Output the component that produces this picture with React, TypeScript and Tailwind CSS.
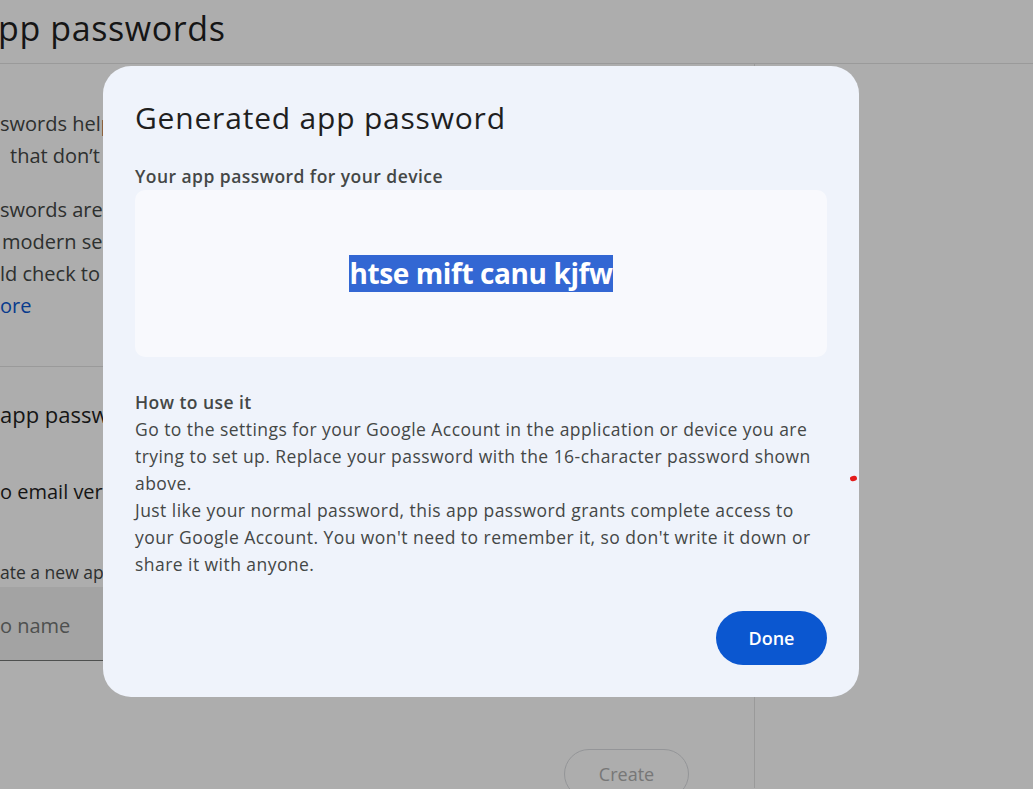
const sans = "font-['Open_Sans','Liberation_Sans',sans-serif]";

function BackgroundPage() {
  return (
    <div className="h-[789px] bg-white text-[#1f1f1f]">
      {/* Header */}
      <header className="h-16 border-b border-[#e3e3e3] flex items-center pb-[8px]">
        <h1 className="text-[34px] leading-[44px] tracking-[0.6px] -ml-[2px] whitespace-nowrap">pp passwords</h1>
      </header>

      <div className="flex">
        <main className="w-[755px] border-r border-[#e3e3e3] h-[724px]">
          {/* Intro, clipped where the dialog covers it */}
          <div className="w-[103px] overflow-hidden pt-[44px] text-[20px] leading-[32px] text-[#444746] whitespace-nowrap">
            <p>swords help you</p>
            <p className="pl-[10px]">that don’t support</p>
            <p className="mt-[22px]">swords are less</p>
            <p className="pl-[2px]">modern security</p>
            <p>ld check to see</p>
            <p className="text-[#0b57d0]">ore</p>
          </div>

          {/* Your app passwords */}
          <section className="mt-[44px] border-t border-[#e3e3e3] pt-[33px] whitespace-nowrap">
            <div className="w-[103px] overflow-hidden">
              <h2 className="text-[22px] leading-[28px] text-[#1f1f1f]">app passwords</h2>
              <p className="mt-[48px] text-[20px] leading-[32px] text-[#1f1f1f]">o email verification</p>
              <p className="mt-[52px] text-[17.5px] leading-[24px] text-[#444746]">ate a new app specific</p>
            </div>
            <div className="mt-[3px] w-[690px] h-[74px] bg-[#f0f0f0] border-b border-[#747775] flex items-center pt-[5px]">
              <span className="text-[20px] text-[#747775]">o name</span>
            </div>
            <div className="mt-[88px] flex justify-end pr-[65px]">
              <button className="w-[125px] h-[50px] rounded-full border border-[#dadce0] text-[18px] text-[#b0b0b0] font-medium">
                Create
              </button>
            </div>
          </section>
        </main>
        <aside className="flex-1" />
      </div>
    </div>
  );
}

function PasswordDialog() {
  return (
    <div className="fixed left-[103px] top-[66px] w-[756px] h-[631px] rounded-[28px] bg-[#eff3fb] px-8 pt-[32px] pb-8 flex flex-col">
      <h2 className="text-[30px] leading-[40px] tracking-[0.8px] text-[#1f1f1f]">Generated app password</h2>
      <p className="mt-[26px] text-[17.5px] leading-[24px] tracking-[0.45px] font-semibold text-[#444746]">
        Your app password for your device
      </p>
      <div className="mt-[2px] h-[167px] rounded-[10px] bg-[#f8f9fd] flex items-center justify-center">
        <span className="bg-[#3367d3] text-white text-[28px] leading-[37px] tracking-[-0.4px] font-bold">
          htse mift canu kjfw
        </span>
      </div>

      <div className="mt-[32px] text-[17.5px] leading-[27px] tracking-[0.45px] text-[#444746]">
        <p className="font-semibold">How to use it</p>
        <p>
          Go to the settings for your Google Account in the application or device you are trying to set up. Replace
          your password with the 16-character password shown above.
        </p>
        <p>
          Just like your normal password, this app password grants complete access to your Google Account. You won't
          need to remember it, so don't write it down or share it with anyone.
        </p>
      </div>

      <div className="mt-auto flex justify-end">
        <button className="w-[111px] h-[54px] rounded-full bg-[#0b57d0] text-white text-[18px] font-semibold">
          Done
        </button>
      </div>
    </div>
  );
}

export default function App() {
  return (
    <div className={`relative h-[789px] overflow-hidden ${sans}`}>
      <BackgroundPage />
      {/* Scrim */}
      <div className="fixed inset-0 bg-black/[0.32]" />
      <PasswordDialog />
      {/* Stray red mark */}
      <span className="fixed left-[850px] top-[476px] w-[7px] h-[5px] rounded-full bg-[#e41c1c] -rotate-12" />
    </div>
  );
}
